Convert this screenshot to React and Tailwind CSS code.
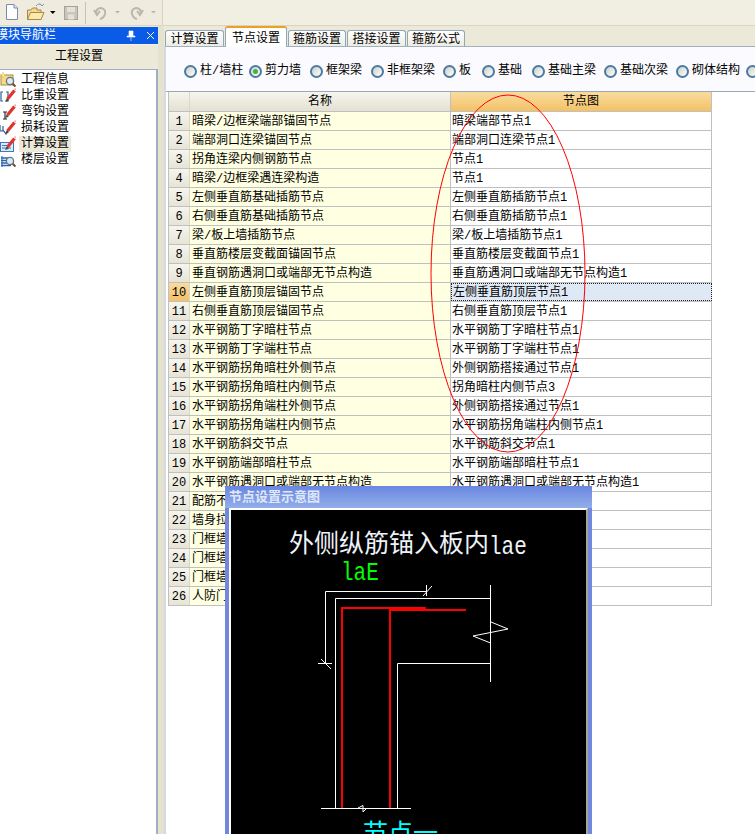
const FONT = "font-['Liberation_Mono','Noto_Sans_CJK_SC',monospace]";

const rows = [
  ["暗梁/边框梁端部锚固节点", "暗梁端部节点1"],
  ["端部洞口连梁锚固节点", "端部洞口连梁节点1"],
  ["拐角连梁内侧钢筋节点", "节点1"],
  ["暗梁/边框梁遇连梁构造", "节点1"],
  ["左侧垂直筋基础插筋节点", "左侧垂直筋插筋节点1"],
  ["右侧垂直筋基础插筋节点", "右侧垂直筋插筋节点1"],
  ["梁/板上墙插筋节点", "梁/板上墙插筋节点1"],
  ["垂直筋楼层变截面锚固节点", "垂直筋楼层变截面节点1"],
  ["垂直钢筋遇洞口或端部无节点构造", "垂直筋遇洞口或端部无节点构造1"],
  ["左侧垂直筋顶层锚固节点", "左侧垂直筋顶层节点1"],
  ["右侧垂直筋顶层锚固节点", "右侧垂直筋顶层节点1"],
  ["水平钢筋丁字暗柱节点", "水平钢筋丁字暗柱节点1"],
  ["水平钢筋丁字端柱节点", "水平钢筋丁字端柱节点1"],
  ["水平钢筋拐角暗柱外侧节点", "外侧钢筋搭接通过节点1"],
  ["水平钢筋拐角暗柱内侧节点", "拐角暗柱内侧节点3"],
  ["水平钢筋拐角端柱外侧节点", "外侧钢筋搭接通过节点1"],
  ["水平钢筋拐角端柱内侧节点", "水平钢筋拐角端柱内侧节点1"],
  ["水平钢筋斜交节点", "水平钢筋斜交节点1"],
  ["水平钢筋端部暗柱节点", "水平钢筋端部暗柱节点1"],
  ["水平钢筋遇洞口或端部无节点构造", "水平钢筋遇洞口或端部无节点构造1"],
  ["配筋不", ""],
  ["墙身拉", ""],
  ["门框墙", ""],
  ["门框墙", ""],
  ["门框墙", ""],
  ["人防门", ""],
];

const radios = [
  ["柱/墙柱", "w-[65px]"],
  ["剪力墙", "w-[61px]", true],
  ["框架梁", "w-[61px]"],
  ["非框架梁", "w-[72px]"],
  ["板", "w-[39px]"],
  ["基础", "w-[50px]"],
  ["基础主梁", "w-[72px]"],
  ["基础次梁", "w-[72px]"],
  ["砌体结构", "w-[70px]"],
  ["", "w-[20px]"],
];

const tabs = [
  ["计算设置", "w-[59px]"],
  ["节点设置", "w-[62px]", true],
  ["箍筋设置", "w-[58px]"],
  ["搭接设置", "w-[59px]"],
  ["箍筋公式", "w-[58px]"],
];

function Pencil() {
  return (
    <g fill="none">
      <path d="M7.5 11 L14.5 2.5" stroke="#e0352b" strokeWidth="3.2" />
      <path d="M14.5 0.5 L16 2" stroke="#f3a9a0" strokeWidth="1.5" />
      <path d="M7 10.5 L5.5 13.5 L8.5 12.5" fill="#333" stroke="#555" strokeWidth="0.7" />
    </g>
  );
}

function Lens() {
  return (
    <g fill="none">
      <circle cx="10" cy="9" r="3.6" fill="#dfe9f2" stroke="#5f7588" strokeWidth="1.3" />
      <path d="M12.8 11.8 L15.5 14.6" stroke="#6b4a24" strokeWidth="2" />
    </g>
  );
}

function NavIcon({ kind }) {
  return (
    <svg width="16" height="16" viewBox="0 0 16 16" className="shrink-0" fill="none">
      {kind === "info" && (
        <>
          <rect x="1" y="3" width="12" height="10" fill="#f4dc8a" stroke="#a98a3a" />
          <path d="M3 0 L3.8 2.6 L6.5 3 L3.8 3.8 L3 6.5 L2.2 3.8 L0 3 L2.2 2.6 Z" fill="#fff7b0" stroke="#d9b23a" strokeWidth="0.4" />
          <Lens />
        </>
      )}
      {kind === "ratio" && (
        <>
          <path d="M3 4 H1 V13 H3 M6 4 H8 V13 H6" stroke="#2c5f9e" strokeWidth="1.2" />
          <Pencil />
        </>
      )}
      {kind === "hook" && (
        <>
          <path d="M3 8 H7 M5 8 V15 M3 15 H7" stroke="#222" strokeWidth="1.1" />
          <Pencil />
        </>
      )}
      {kind === "loss" && (
        <>
          <path d="M0 5 V11 H3 V6 M3 10 L6 14 L8 10" stroke="#2c5f9e" strokeWidth="1.2" />
          <Pencil />
        </>
      )}
      {kind === "calc" && (
        <>
          <rect x="0.5" y="6.5" width="13" height="9" fill="#dbe9f8" stroke="#3d79bb" />
          <path d="M2 9.5 H8 M2 12 H11" stroke="#3d79bb" />
          <Pencil />
        </>
      )}
      {kind === "floor" && (
        <>
          <path d="M1 6 H11 M1 8.5 H12 M1 11 H12 M1 13.5 H11" stroke="#2766b0" strokeWidth="1.6" />
          <path d="M2 4 V15" stroke="#2766b0" />
          <Lens />
        </>
      )}
    </svg>
  );
}

function Toolbar() {
  return (
    <div className="flex h-[26px] shrink-0 items-center bg-[#efecdf] border-b border-[#d8d5c4]">
      <svg width="163" height="26" viewBox="0 0 163 26" fill="none" className="shrink-0">
        <path d="M6.5 4.5 H14 L17.5 8 V19.5 H6.5 Z" fill="#fdfdfd" stroke="#7b8ba8" />
        <path d="M14 4.5 V8 H17.5" fill="#dfe6f0" stroke="#7b8ba8" />
        <path d="M27.5 10 H31 L32.5 8 H37 V10 H41 V19.5 H27.5 Z" fill="#f2d98c" stroke="#a8894a" />
        <path d="M27.5 19.5 L30.5 12.5 H44 L41 19.5 Z" fill="#fbe9ae" stroke="#a8894a" />
        <path d="M36 6 Q39 2 42 6 M42 6 L40 3.5 M42 6 L44 4" stroke="#7a97b4" />
        <path d="M50 11 H55.5 L52.8 14 Z" fill="#000" />
        <rect x="64.5" y="6.5" width="13" height="13" fill="#c9c7bc" stroke="#a5a398" />
        <rect x="67" y="7" width="8" height="5" fill="#e4e2d8" />
        <rect x="68" y="14.5" width="6" height="5" fill="#e4e2d8" />
        <path d="M85.5 2 V24" stroke="#c6c3b2" />
        <path d="M96 14 Q96 8 101 8 Q106 9 105 14 Q104 18 100 19 M94 10 L97 15 L100 11" stroke="#b9b7ac" strokeWidth="2" />
        <path d="M115 11 H120 L117.5 13.5 Z" fill="#b9b7ac" />
        <path d="M141 14 Q141 8 136 8 Q131 9 132 14 Q133 18 137 19 M143 10 L140 15 L137 11" stroke="#b9b7ac" strokeWidth="2" />
        <path d="M151 11 H156 L153.5 13.5 Z" fill="#b9b7ac" />
        <path d="M162.5 0 V26" stroke="#d6d3c3" />
      </svg>
      <div className="h-full flex-1 bg-[#f1eee2]" />
    </div>
  );
}

function Sidebar() {
  const items = [
    ["info", "工程信息"],
    ["ratio", "比重设置"],
    ["hook", "弯钩设置"],
    ["loss", "损耗设置"],
    ["calc", "计算设置", true],
    ["floor", "楼层设置"],
  ];
  return (
    <aside className="flex h-full w-[158px] shrink-0 flex-col overflow-hidden bg-[#ece9d8]">
      <div className="mt-px flex h-[17px] shrink-0 items-center justify-between bg-[#0a5ce6] text-white">
        <span className="-ml-[4px] mt-[2px] text-[12px] leading-[17px]">模块导航栏</span>
        <div className="mr-[3px] flex items-center gap-[10px]">
          <svg width="10" height="11" viewBox="0 0 10 11" fill="none">
            <path d="M3 1 H7 V6 H9 V7 H1 V6 H3 Z M5 7 V11" fill="#fff" stroke="#fff" strokeWidth="0.6" />
          </svg>
          <svg width="9" height="9" viewBox="0 0 9 9" fill="none">
            <path d="M1 1 L8 8 M8 1 L1 8" stroke="#fff" />
          </svg>
        </div>
      </div>
      <div className="flex h-[25px] shrink-0 items-center justify-center border-t border-[#f6f4ea] bg-[#ece9d8] text-[12px] text-black">
        工程设置
      </div>
      <div className="flex-1 border-t border-r-2 border-[#9db0c4] bg-white pt-[2px]">
        {items.map(([kind, label, selected]) => (
          <div key={label} className="flex h-[16px] items-center">
            <NavIcon kind={kind} />
            <span
              className={`ml-[3px] px-[2px] text-[12px] leading-[16px] text-black ${selected ? "bg-[#ece9d8]" : ""}`}
            >
              {label}
            </span>
          </div>
        ))}
      </div>
    </aside>
  );
}

function Radio({ label, width, checked }) {
  return (
    <div className={`flex shrink-0 items-center ${width}`}>
      <span className="flex h-[13px] w-[13px] shrink-0 items-center justify-center rounded-full border-2 border-[#4a7aa6] bg-linear-to-br from-[#cfcfc4] to-white">
        {checked && <span className="h-[5px] w-[5px] rounded-full bg-[#3fb53f]" />}
      </span>
      {label && <span className="ml-[3px] whitespace-nowrap text-[12px] leading-[16px] text-black">{label}</span>}
    </div>
  );
}

function Grid() {
  return (
    <div className="ml-[2px] w-[544px] border-l border-[#c0c0c0] text-[12px] text-black">
      <div className="flex h-[20px] border-b border-[#c0c0c0]">
        <div className="w-[21px] shrink-0 border-r border-[#d9d7cb] bg-linear-to-b from-[#f6f5ee] to-[#e4e1d2]" />
        <div className="flex w-[261px] shrink-0 items-center justify-center border-r border-[#c0c0c0] bg-linear-to-b from-[#f6f5ee] to-[#e4e1d2] pt-[2px] leading-[17px]">
          名称
        </div>
        <div className="flex w-[261px] shrink-0 items-center justify-center border-r border-[#c0c0c0] bg-linear-to-b from-[#f9dc9e] to-[#f3c166] pt-[2px] leading-[17px]">
          节点图
        </div>
      </div>
      {rows.map(([name, node], i) => {
        const selected = i === 9;
        return (
          <div key={i} className="flex h-[19px] border-b border-[#c0c0c0] leading-[17px]">
            <div
              className={`flex w-[21px] shrink-0 items-center justify-center border-r border-[#d9d7cb] bg-linear-to-b pt-[2px] ${
                selected ? "from-[#f9dc9e] to-[#f3c166]" : "from-[#f6f5ee] to-[#e7e4d6]"
              }`}
            >
              {i + 1}
            </div>
            <div className="w-[261px] shrink-0 overflow-hidden whitespace-nowrap border-r border-[#c0c0c0] bg-[#ffffe1] pl-[2px] pt-[2px]">
              {name}
            </div>
            <div
              className={`w-[261px] shrink-0 overflow-hidden whitespace-nowrap border-r pl-[1px] ${
                selected ? "border border-dotted border-[#222] bg-[#dfe8f5] pl-0 pt-px" : "border-[#c0c0c0] bg-white pt-[2px]"
              }`}
            >
              {node}
            </div>
          </div>
        );
      })}
    </div>
  );
}

function MainPanel() {
  return (
    <section className="flex h-full min-w-0 flex-1 flex-col overflow-hidden bg-[#ece9d8]">
      <div className="flex h-[20px] shrink-0 items-end pl-[1px]">
        {tabs.map(([label, width, active]) => (
          <div
            key={label}
            className={`-mb-px mr-px flex shrink-0 items-center justify-center rounded-t-[3px] border border-[#91a7b4] pt-[2px] text-[12px] text-black ${width} ${
              active
                ? "relative z-10 h-[21px] border-t-2 border-b-0 border-t-[#f0a020] bg-white"
                : "h-[17px] border-b-0 bg-linear-to-b from-white to-[#ecebe2]"
            }`}
          >
            {label}
          </div>
        ))}
      </div>
      <div className="flex min-h-0 flex-1 flex-col border-t border-l-2 border-[#9fb0bf] border-l-[#d5dae0] bg-white">
        <div className="flex h-[45px] shrink-0 items-center overflow-hidden border-b border-[#9aa8b8] bg-[#fbfbff] pl-[18px] pt-[4px]">
          {radios.map(([label, width, checked], i) => (
            <Radio key={i} label={label} width={width} checked={checked} />
          ))}
        </div>
        <Grid />
      </div>
    </section>
  );
}

function NodeDialog() {
  return (
    <div className="absolute left-[225px] top-[486px] z-20 flex h-[348px] w-[367px] flex-col overflow-hidden bg-[#7288de]">
      <div className="h-[22px] shrink-0 bg-linear-to-b from-[#6a86e0] to-[#93aeea] pl-[4px] text-[13px] font-bold leading-[24px] text-[#dfe8f8]">
        节点设置示意图
      </div>
      <div className="ml-[4px] mr-[4px] min-h-0 flex-1 border-l-2 border-r-2 border-t-2 border-l-white border-r-[#a8a59a] border-t-white bg-black">
        <div className="relative h-full w-full overflow-hidden">
          <svg className="absolute inset-0" width="355" height="324" viewBox="231 510 355 324" fill="none">
            <g stroke="#fff" strokeWidth="1">
              <path d="M325.5 663 V591.5 H426.5" />
              <path d="M426.5 585 V596 M423 596 L432 586" />
              <path d="M318 663.5 H332 M321 659 L331 669" />
              <path d="M335.5 808 V598.5 H490.5" />
              <path d="M490.5 585 V682" />
              <path d="M397.5 808 V663.5 H490.5" />
              <path d="M321 808.5 H411" />
              <path d="M491 622 L508 629 L473 636 L490.5 643" />
              <path d="M358 808 L363 805.5 V812 L367 808" />
            </g>
            <g stroke="#ff0000" strokeWidth="2">
              <path d="M342 808 V608 H426" />
              <path d="M390 808 V610 H466" />
              <path d="M390 609 H426" strokeWidth="4" />
            </g>
          </svg>
          <span className="absolute left-[58px] top-[21px] flex items-baseline whitespace-nowrap text-[25px] leading-[30px] text-[#eef3fa]">
            外侧纵筋锚入板内
            <span className="inline-block origin-bottom translate-y-[3px] scale-y-[1.2] text-[21px] leading-[24px]">lae</span>
          </span>
          <span className="absolute left-[110px] top-[55px] origin-bottom scale-y-[1.2] whitespace-nowrap text-[21px] leading-[22px] text-[#00ff00]">
            laE
          </span>
          <span className="absolute left-[132px] top-[311px] whitespace-nowrap text-[25px] leading-[30px] text-[#00ffff]">
            节点一
          </span>
        </div>
      </div>
    </div>
  );
}

export default function App() {
  return (
    <div className={`relative flex h-[834px] w-[755px] flex-col overflow-hidden bg-[#ece9d8] ${FONT}`}>
      <Toolbar />
      <div className="flex min-h-0 flex-1">
        <Sidebar />
        <div className="w-[6px] shrink-0 bg-[#e6e2d0]" />
        <MainPanel />
      </div>
      <svg
        className="pointer-events-none absolute left-[430px] top-[94px] z-10"
        width="156"
        height="359"
        viewBox="0 0 156 359"
        fill="none"
      >
        <ellipse cx="78" cy="179.5" rx="77" ry="178.5" stroke="#ff0000" strokeWidth="1" />
      </svg>
      <NodeDialog />
    </div>
  );
}
